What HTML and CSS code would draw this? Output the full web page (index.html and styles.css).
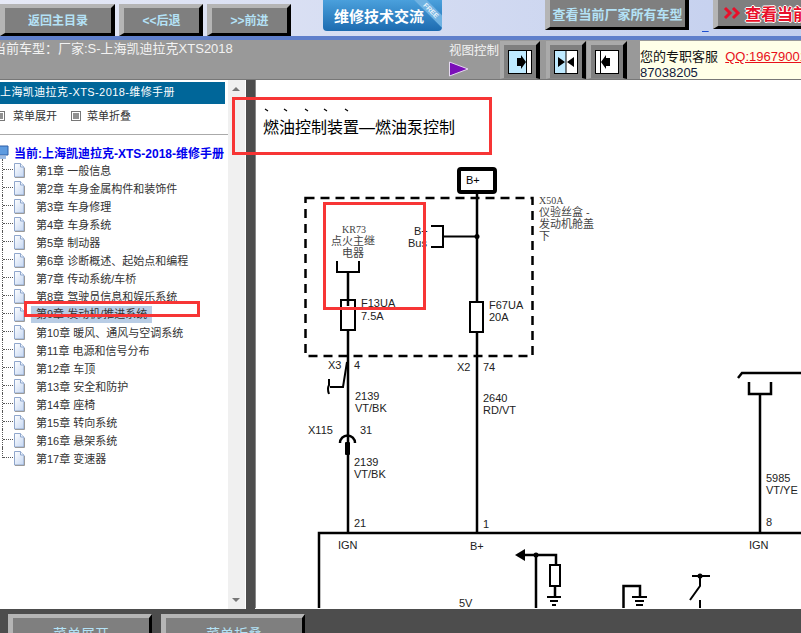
FILE: index.html
```html
<!DOCTYPE html>
<html lang="zh-CN">
<head>
    <meta charset="UTF-8">
    <meta name="viewport" content="width=device-width, initial-scale=1.0">
    <title>维修手册</title>
    <link rel="stylesheet" href="styles.css">
</head>
<body>
    <svg class="defs" width="0" height="0">
        <defs>
            <linearGradient id="docFill" x1="0" y1="0" x2="1" y2="1">
                <stop offset="0" stop-color="#ffffff"/>
                <stop offset="1" stop-color="#c4d6f2"/>
            </linearGradient>
            <symbol id="doc" viewBox="0 0 12 15">
                <path d="M1.5 .5H7.5L11 4V14H1.5Z" fill="url(#docFill)" stroke="#8fa6cc"/>
                <path d="M7.5 .5V4H11" fill="#eef3fb" stroke="#8fa6cc"/>
                <path d="M2 14.5H11.5V5" fill="none" stroke="#9a9a9a"/>
            </symbol>
            <symbol id="menuIcon" viewBox="0 0 10 10">
                <rect x=".5" y=".5" width="9" height="9" fill="#fff" stroke="#777"/>
                <path d="M2 3H8M2 5H8M2 7H8" stroke="#222"/>
            </symbol>
        </defs>
    </svg>

    <div class="topbar">
        <a class="btn btn-first">返回主目录</a>
        <a class="btn btn-nav">&lt;&lt;后退</a>
        <a class="btn btn-nav">&gt;&gt;前进</a>
        <a class="forum-btn">维修技术交流<span class="free">FREE</span></a>
        <a class="btn btn-models">查看当前厂家所有车型</a>
        <span class="tiny-link">&nbsp;&nbsp;&nbsp;</span>
        <a class="btn btn-red">
            <svg class="chevrons" width="20" height="14" viewBox="0 0 20 14">
                <path d="M2 2L7 7L2 12M10 2L15 7L10 12" fill="none" stroke="#e8102a" stroke-width="3"/>
            </svg>
            查看当前厂家
        </a>
    </div>

    <div class="infobar">
        <div class="car-name">当前车型：厂家:S-上海凯迪拉克XTS2018</div>
        <div class="view-label">
            <div>视图控制</div>
            <svg width="20" height="16" viewBox="0 0 20 16"><path d="M.5 1L19 8L.5 15Z" fill="#7a0fb8" stroke="#e6d9f2"/></svg>
        </div>
        <div class="view-btn view-btn-first">
            <svg width="24" height="24" viewBox="0 0 24 24">
                <rect x=".5" y=".5" width="23" height="23" fill="#bfeaff" stroke="#000"/>
                <rect x="19" y="1" width="4" height="22" fill="#fff"/>
                <path d="M18.5 1V23" stroke="#000"/>
                <path d="M9 8H13V5L18 12L13 19V16H9Z" fill="#000"/>
            </svg>
        </div>
        <div class="view-btn view-btn-mid">
            <svg width="24" height="24" viewBox="0 0 24 24">
                <rect x=".5" y=".5" width="23" height="23" fill="#fff" stroke="#000"/>
                <rect x="1" y="1" width="11" height="22" fill="#bfeaff"/>
                <path d="M12 1V23" stroke="#000"/>
                <path d="M4 7L11 12L4 17ZM20 7L13 12L20 17Z" fill="#000"/>
            </svg>
        </div>
        <div class="view-btn">
            <svg width="24" height="24" viewBox="0 0 24 24">
                <rect x=".5" y=".5" width="23" height="23" fill="#fff" stroke="#000"/>
                <path d="M5.5 1V23" stroke="#000"/>
                <path d="M15 8H11V5L6 12L11 19V16H15Z" fill="#000"/>
            </svg>
        </div>
        <div class="service">
            <div>您的专职客服&nbsp; <a class="qq">QQ:196790018</a></div>
            <div class="phone">87038205</div>
        </div>
    </div>

    <div class="main">
        <div class="sidebar">
            <div class="side-title">上海凯迪拉克-XTS-2018-维修手册</div>
            <div class="menu-tools">
                <span class="tool tool-open"><svg width="10" height="10"><use href="#menuIcon"/></svg>菜单展开</span>
                <span class="tool"><svg width="10" height="10"><use href="#menuIcon"/></svg>菜单折叠</span>
            </div>
            <div class="tree-root">
                <svg width="10" height="16" viewBox="0 0 10 16">
                    <path d="M-6 2H8V11H-6Z" fill="#5d9be0" stroke="#2c5ea8"/>
                    <path d="M0 12H6V15H0Z" fill="#9dbde6"/>
                </svg>
                当前:上海凯迪拉克-XTS-2018-维修手册
            </div>
            <ul class="tree">
                <li><svg class="doc"><use href="#doc"/></svg><span>第1章 一般信息</span></li>
                <li><svg class="doc"><use href="#doc"/></svg><span>第2章 车身金属构件和装饰件</span></li>
                <li><svg class="doc"><use href="#doc"/></svg><span>第3章 车身修理</span></li>
                <li><svg class="doc"><use href="#doc"/></svg><span>第4章 车身系统</span></li>
                <li><svg class="doc"><use href="#doc"/></svg><span>第5章 制动器</span></li>
                <li><svg class="doc"><use href="#doc"/></svg><span>第6章 诊断概述、起始点和编程</span></li>
                <li><svg class="doc"><use href="#doc"/></svg><span>第7章 传动系统/车桥</span></li>
                <li><svg class="doc"><use href="#doc"/></svg><span>第8章 驾驶员信息和娱乐系统</span></li>
                <li class="selected"><svg class="doc"><use href="#doc"/></svg><span>第9章 发动机/推进系统</span></li>
                <li><svg class="doc"><use href="#doc"/></svg><span>第10章 暖风、通风与空调系统</span></li>
                <li><svg class="doc"><use href="#doc"/></svg><span>第11章 电源和信号分布</span></li>
                <li><svg class="doc"><use href="#doc"/></svg><span>第12章 车顶</span></li>
                <li><svg class="doc"><use href="#doc"/></svg><span>第13章 安全和防护</span></li>
                <li><svg class="doc"><use href="#doc"/></svg><span>第14章 座椅</span></li>
                <li><svg class="doc"><use href="#doc"/></svg><span>第15章 转向系统</span></li>
                <li><svg class="doc"><use href="#doc"/></svg><span>第16章 悬架系统</span></li>
                <li><svg class="doc"><use href="#doc"/></svg><span>第17章 变速器</span></li>
            </ul>
        </div>
        <div class="scrollbar">
            <span class="arrow-up"></span>
            <span class="arrow-down"></span>
        </div>
        <div class="divider"></div>
        <div class="content">
            <svg class="diagram" width="546" height="529" viewBox="255 80 546 529">
                <text class="title" x="263" y="133">燃油控制装置—燃油泵控制</text>
                <path class="ticks" d="M265 109L268 111M284 109L287 111M305 109L308 111M324 109L327 111M345 109L348 111"/>

                <rect class="bplus" x="459" y="169" width="36" height="23" rx="2"/>
                <text x="466" y="184" class="label">B+</text>
                <rect class="dash" x="305.500" y="198" width="227" height="158"/>

                <path class="wire" d="M477 192V533"/>
                <circle cx="477" cy="236.500" r="2.500"/>
                <path class="wire-thin" d="M444 236.500H477"/>
                <path class="wire-thin" d="M431 226H443V247H431"/>
                <text class="small" x="414" y="235">B+</text>
                <text class="small" x="408" y="247">Bus</text>

                <text class="serif" x="342" y="233">KR73</text>
                <text class="cjk" x="331" y="245">点火主继</text>
                <text class="cjk" x="342" y="257">电器</text>
                <path class="wire-thin" d="M337 261V272H359V261"/>
                <path class="wire" d="M348 272V533"/>

                <rect class="fuse" x="341" y="300" width="14" height="30"/>
                <path class="wire" d="M348 300V306"/>
                <text class="small" x="361" y="307">F13UA</text>
                <text class="small" x="361" y="320">7.5A</text>
                <rect class="fuse" x="470" y="302" width="13" height="30"/>
                <text class="small" x="489" y="309">F67UA</text>
                <text class="small" x="489" y="321">20A</text>

                <text class="serif" x="539" y="204">X50A</text>
                <text class="cjk" x="539" y="216">仪验丝盒 -</text>
                <text class="cjk" x="539" y="228">发动机舱盖</text>
                <text class="cjk" x="539" y="240">下</text>

                <text class="small" x="328" y="369">X3</text>
                <text class="small" x="354" y="369">4</text>
                <text class="small" x="457" y="371">X2</text>
                <text class="small" x="483" y="371">74</text>

                <path class="wire-thin" d="M347 362L343 387H330"/>
                <path class="wire-thin" d="M329 379V385Q327 389 329 394"/>
                <text class="small" x="355" y="400">2139</text>
                <text class="small" x="355" y="412">VT/BK</text>
                <text class="small" x="483" y="402">2640</text>
                <text class="small" x="483" y="414">RD/VT</text>
                <text class="small" x="308" y="434">X115</text>
                <text class="small" x="360" y="434">31</text>
                <path class="wire" d="M340 443A7.500 7.500 0 0 1 355 443"/>
                <rect x="345" y="442" width="5" height="13" rx="1"/>
                <text class="small" x="354" y="466">2139</text>
                <text class="small" x="354" y="478">VT/BK</text>
                <text class="small" x="354" y="527">21</text>
                <text class="small" x="483" y="528">1</text>

                <path class="wire" d="M319 609V533H801"/>
                <text class="small" x="338" y="549">IGN</text>
                <text class="small" x="470" y="550">B+</text>
                <text class="small" x="459" y="607">5V</text>

                <path d="M515 555L525 549V561Z"/>
                <path class="wire" d="M524 555H556V565M536 555V609M555 587V596"/>
                <circle cx="536" cy="555" r="2.500"/>
                <rect class="fuse" x="550" y="565" width="10" height="21"/>
                <path class="wire-thin" d="M547 597H561M550 601H558M552 605H556"/>

                <path class="wire" d="M623.500 609V586H640V597"/>
                <path class="wire-thin" d="M632 597H647M635 601H644M636 605H643"/>

                <path class="wire-thin" d="M692 576H710M700 576V586L690 600M700 600V609"/>
                <circle cx="700" cy="576" r="2.500"/>

                <path class="wire" d="M738 378L742 373H801"/>
                <path class="wire" d="M749 382V394H771V382"/>
                <path class="wire" d="M760 394V533"/>
                <text class="small" x="766" y="482">5985</text>
                <text class="small" x="766" y="494">VT/YE</text>
                <text class="small" x="766" y="526">8</text>
                <text class="small" x="749" y="549">IGN</text>
            </svg>
        </div>
    </div>

    <div class="bottombar">
        <a class="btn btn-bottom">菜单展开</a>
        <a class="btn btn-bottom">菜单折叠</a>
    </div>

    <div class="mark mark-title"></div>
    <div class="mark mark-relay"></div>
    <div class="mark mark-menu"></div>
</body>
</html>
```

FILE: styles.css
```css
* {
    box-sizing: border-box;
}
html, body {
    margin: 0;
    height: 100%;
    overflow: hidden;
}
body {
    position: relative;
    display: flex;
    flex-direction: column;
    width: 801px;
    height: 633px;
    font-family: "Liberation Sans", "Noto Sans CJK SC", sans-serif;
    font-size: 11px;
    background: #fff;
}
.defs {
    position: absolute;
}

/* top bar */
.topbar {
    display: flex;
    align-items: flex-start;
    flex: none;
    height: 40px;
    overflow: hidden;
    background: linear-gradient(to right, #e6e9f6, #c3cfee);
    border-bottom: 4px solid #5f7fcb;
}
.btn {
    display: flex;
    align-items: center;
    justify-content: center;
    flex: none;
    background: #7f7f7f;
    border-style: solid;
    border-width: 4px 4px 3px 5px;
    border-color: #b5b5b5 #000 #000 #b5b5b5;
    color: #b4e2f6;
    font-size: 12px;
    font-weight: bold;
    white-space: nowrap;
}
.btn-first {
    width: 115px;
    height: 32px;
    margin-top: 4px;
    padding-bottom: 3px;
}
.btn-nav {
    width: 84px;
    height: 32px;
    margin: 4px 0 0 4px;
    padding-bottom: 3px;
}
.forum-btn {
    position: relative;
    flex: none;
    width: 119px;
    height: 31px;
    margin-left: 32px;
    padding: 5px 0 0 11px;
    overflow: hidden;
    border-radius: 0 0 4px 4px;
    background: linear-gradient(#4aa0dc, #1d6bb0);
    color: #fff;
    font-size: 15px;
    font-weight: bold;
    white-space: nowrap;
}
.free {
    position: absolute;
    top: 6px;
    right: -9px;
    width: 40px;
    background: #6fb2e2;
    color: #eaf4fb;
    font-size: 7px;
    line-height: 9px;
    text-align: center;
    transform: rotate(45deg);
}
.btn-models {
    width: 144px;
    height: 30px;
    margin-left: 103px;
    border-top: 0;
    font-size: 13px;
}
.tiny-link {
    flex: none;
    width: 24px;
    margin-top: 23px;
    padding-left: 13px;
    font-size: 8px;
    color: #1f4fd0;
    text-decoration: underline;
}
.btn-red {
    justify-content: flex-start;
    width: 140px;
    height: 29px;
    border-top: 0;
    padding-left: 5px;
    color: #e8102a;
    font-size: 16px;
    text-shadow: 1px 0 #fff, -1px 0 #fff, 0 1px #fff, 0 -1px #fff;
}
.chevrons {
    flex: none;
    margin-right: 2px;
}

/* info bar */
.infobar {
    display: flex;
    flex: none;
    height: 40px;
    padding-top: 1px;
    background: #999;
    border-bottom: 1px solid #777;
    overflow: hidden;
}
.car-name {
    flex: none;
    width: 456px;
    margin-left: -7px;
    color: #f2f2f2;
    font-size: 13px;
    line-height: 15px;
}
.view-label {
    flex: none;
    width: 51px;
    color: #f2f2f2;
    font-size: 12.500px;
    line-height: 20px;
}
.view-label svg {
    display: block;
}
.view-btn {
    display: flex;
    align-items: center;
    justify-content: center;
    flex: none;
    width: 40px;
    height: 38px;
    background: #7f7f7f;
    border-style: solid;
    border-width: 4px 4px 1px 4px;
    border-color: #aaa #000 #888 #aaa;
}
.view-btn-first {
    margin-right: 6px;
}
.view-btn-mid {
    margin-right: 1px;
}
.service {
    flex: none;
    width: 180px;
    margin-left: 13px;
    padding-top: 8px;
    background: #ffffe8;
    color: #111;
    font-size: 13px;
    line-height: 16px;
    white-space: nowrap;
}
.qq {
    color: #e8101a;
    text-decoration: underline;
}
.phone {
    color: #101a3c;
}

/* sidebar */
.main {
    display: flex;
    flex: 1;
    min-height: 0;
}
.sidebar {
    flex: none;
    width: 228px;
    padding-top: 2px;
    color: #333;
    overflow: hidden;
}
.side-title {
    width: 225px;
    height: 22px;
    background: #006699;
    color: #fff;
    font-size: 11px;
    letter-spacing: .4px;
    line-height: 20px;
}
.menu-tools {
    display: flex;
    height: 31px;
    align-items: flex-start;
    padding-top: 5px;
    margin-bottom: 8px;
    border-bottom: 1px solid #aaa;
    line-height: 14px;
}
.tool {
    display: flex;
    align-items: center;
    gap: 6px;
}
.tool-open {
    margin-left: -5px;
    margin-right: 14px;
    gap: 8px;
}
.tree-root {
    display: flex;
    align-items: center;
    gap: 4px;
    height: 18px;
    color: #0000ee;
    font-size: 12px;
    font-weight: bold;
    white-space: nowrap;
}
.tree {
    margin: 0;
    padding: 0;
    list-style: none;
}
.tree li {
    position: relative;
    display: flex;
    align-items: center;
    height: 18px;
    padding-left: 13px;
    white-space: nowrap;
}
.tree li::before {
    content: "";
    position: absolute;
    left: 2px;
    top: -2px;
    height: 20px;
    border-left: 1px dotted #555;
}
.tree li:last-child::before {
    height: 11px;
}
.tree li::after {
    content: "";
    position: absolute;
    left: 3px;
    top: 8px;
    width: 10px;
    border-top: 1px dotted #555;
}
.doc {
    flex: none;
    width: 12px;
    height: 15px;
    margin-right: 11px;
}
.tree li.selected span {
    margin-left: -5px;
    padding: 0 5px;
    line-height: 17px;
    background: #b9cde5;
}

/* scrollbar and divider */
.scrollbar {
    display: flex;
    flex: none;
    flex-direction: column;
    justify-content: space-between;
    width: 18px;
    padding: 7px 0 7px 4px;
    background: #f0f0f0;
    border-right: 1px solid #fff;
}
.arrow-up, .arrow-down {
    width: 0;
    height: 0;
    border-left: 4px solid transparent;
    border-right: 4px solid transparent;
}
.arrow-up {
    border-bottom: 4px solid #777;
}
.arrow-down {
    border-top: 4px solid #777;
}
.divider {
    flex: none;
    width: 9px;
    background: #4d4d4d;
}

/* diagram */
.content {
    flex: 1;
    min-width: 0;
    overflow: hidden;
    border-left: 1px solid #888;
    margin-bottom: 1px;
}
.diagram {
    display: block;
    margin-left: -1px;
}
.diagram text {
    font-family: "Liberation Sans", "Noto Sans CJK SC", sans-serif;
    fill: #222;
}
.diagram .title {
    font-size: 16px;
    fill: #000;
}
.diagram .small {
    font-size: 11px;
}
.diagram .label {
    font-size: 11px;
    fill: #000;
}
.diagram .cjk {
    font-size: 11px;
    fill: #444;
}
.diagram .serif {
    font-family: "Liberation Serif", serif;
    font-size: 10px;
    fill: #444;
}
.ticks, .wire, .wire-thin, .dash, .bplus, .fuse {
    fill: none;
    stroke: #000;
}
.wire {
    stroke-width: 2.500;
}
.wire-thin {
    stroke-width: 2;
}
.dash {
    stroke-width: 2.500;
    stroke-dasharray: 9 6;
}
.bplus {
    stroke-width: 4;
}
.fuse {
    fill: #fff;
    stroke-width: 2;
}
.ticks {
    stroke-width: 1.200;
}

/* bottom bar */
.bottombar {
    display: flex;
    flex: none;
    gap: 9px;
    height: 24px;
    padding: 5px 0 0 8px;
    background: #4d4d4d;
    overflow: hidden;
}
.btn-bottom {
    align-items: flex-start;
    width: 144px;
    height: 40px;
    border-width: 4px 3px 3px 5px;
    padding-top: 5px;
    font-size: 14px;
    font-weight: normal;
}

/* red annotation boxes drawn over the screenshot */
.mark {
    position: absolute;
    border: 3px solid #f73535;
}
.mark-title {
    left: 232px;
    top: 97px;
    width: 260px;
    height: 58px;
}
.mark-relay {
    left: 323px;
    top: 202px;
    width: 103px;
    height: 108px;
}
.mark-menu {
    left: 24px;
    top: 301px;
    width: 176px;
    height: 16px;
}
```
